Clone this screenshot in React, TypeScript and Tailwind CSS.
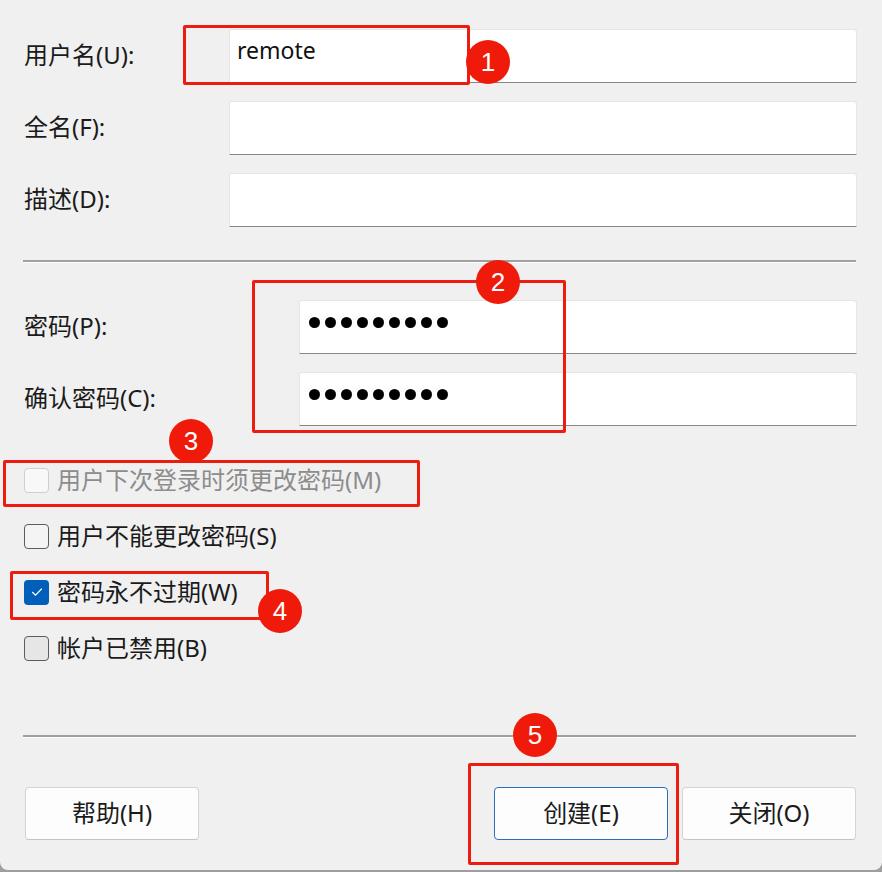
import React from "react";

const FONT = { fontFamily: '"Noto Sans", "Noto Sans CJK SC", sans-serif' };

function TextField({ value }: { value?: string }) {
  return (
    <div className="flex-1 h-[54px] bg-white border border-[#e6e6e6] border-b-[#868686] rounded-t-[3px] pl-[7px] pt-[3px] text-[23px] text-[#111]">
      {value}
    </div>
  );
}

function PasswordField() {
  return (
    <div className="flex-1 h-[54px] bg-white border border-[#e6e6e6] border-b-[#868686] rounded-t-[3px] pl-[9px] pt-[16px] flex items-start gap-[5px]">
      {Array.from({ length: 9 }).map((_, i) => (
        <span key={i} className="block w-[11px] h-[11px] rounded-full bg-black" />
      ))}
    </div>
  );
}

function Row({ label, labelWidth, children }: { label: string; labelWidth: string; children: React.ReactNode }) {
  return (
    <div className="flex items-center pr-[25px]">
      <div className={`${labelWidth} pl-[24px] text-[24px] text-[#1b1b1b] leading-none pb-[2px]`}>{label}</div>
      {children}
    </div>
  );
}

type BoxState = "disabled" | "off" | "on" | "hover";

function CheckRow({ label, state }: { label: string; state: BoxState }) {
  let box = "border border-[#5c5c5c] bg-[#f4f4f4]";
  if (state === "disabled") box = "border border-[#cfcfcf] bg-[#f8f8f8]";
  if (state === "hover") box = "border border-[#5c5c5c] bg-[#e6e6e6]";
  if (state === "on") box = "bg-[#005fb8]";
  return (
    <div className="h-[56px] flex items-center pl-[24px] gap-[8px]">
      <div className={`w-[25px] h-[25px] rounded-[4px] flex items-center justify-center ${box}`}>
        {state === "on" && (
          <svg width="14" height="14" viewBox="0 0 14 14" fill="none">
            <path d="M2.5 7.3 L5.6 10.2 L11.5 4" stroke="white" strokeWidth="1.2" strokeLinecap="round" strokeLinejoin="round" />
          </svg>
        )}
      </div>
      <span className={`text-[24px] leading-none ${state === "disabled" ? "text-[#8c8c8c]" : "text-[#1b1b1b]"}`}>
        {label}
      </span>
    </div>
  );
}

function Separator() {
  return (
    <div className="ml-[23px] mr-[26px]">
      <div className="h-[2px] bg-[#a0a0a0]" />
      <div className="h-[1px] bg-white" />
    </div>
  );
}

function Button({ label, primary }: { label: string; primary?: boolean }) {
  return (
    <div
      className={`w-[174px] h-[53px] rounded-[4px] bg-[#fdfdfd] flex items-center justify-center text-[24px] text-[#1b1b1b] border ${
        primary ? "border-[#2a6fb8]" : "border-[#d4d4d4] border-b-[#c4c4c4]"
      }`}
    >
      <span className="pb-[2px]">{label}</span>
    </div>
  );
}

function Marker({ n, className }: { n: number; className: string }) {
  return (
    <div
      className={`absolute w-[44px] h-[44px] rounded-full bg-[#f01a0a] text-white text-[26px] flex items-center justify-center ${className}`}
      style={{ fontFamily: '"Liberation Sans", Arial, sans-serif' }}
    >
      {n}
    </div>
  );
}

export default function App() {
  return (
    <div className="w-[882px] h-[872px] bg-[#9e9e9e]" style={FONT}>
      <div className="relative w-[882px] h-[870px] bg-[#f0f0f0] rounded-b-[8px] overflow-hidden">
        <div className="pt-[29px] flex flex-col gap-[18px]">
          <Row label="用户名(U):" labelWidth="w-[229px]">
            <TextField value="remote" />
          </Row>
          <Row label="全名(F):" labelWidth="w-[229px]">
            <TextField />
          </Row>
          <Row label="描述(D):" labelWidth="w-[229px]">
            <TextField />
          </Row>
        </div>

        <div className="mt-[33px]">
          <Separator />
        </div>

        <div className="mt-[37px] flex flex-col gap-[18px]">
          <Row label="密码(P):" labelWidth="w-[299px]">
            <PasswordField />
          </Row>
          <Row label="确认密码(C):" labelWidth="w-[299px]">
            <PasswordField />
          </Row>
        </div>

        <div className="mt-[26px] flex flex-col">
          <CheckRow label="用户下次登录时须更改密码(M)" state="disabled" />
          <CheckRow label="用户不能更改密码(S)" state="off" />
          <CheckRow label="密码永不过期(W)" state="on" />
          <CheckRow label="帐户已禁用(B)" state="hover" />
        </div>

        <div className="mt-[59px]">
          <Separator />
        </div>

        <div className="mt-[49px] flex justify-between pl-[25px] pr-[26px]">
          <Button label="帮助(H)" />
          <div className="flex gap-[14px]">
            <Button label="创建(E)" primary />
            <Button label="关闭(O)" />
          </div>
        </div>

        {/* annotations */}
        <div className="absolute left-[183px] top-[25px] w-[287px] h-[60px] border-[3px] border-[#ec1c10] rounded-[2px]" />
        <div className="absolute left-[252px] top-[280px] w-[314px] h-[153px] border-[3px] border-[#ec1c10] rounded-[2px]" />
        <div className="absolute left-[3px] top-[460px] w-[417px] h-[47px] border-[3px] border-[#ec1c10] rounded-[2px]" />
        <div className="absolute left-[10px] top-[571px] w-[259px] h-[49px] border-[3px] border-[#ec1c10] rounded-[2px]" />
        <div className="absolute left-[468px] top-[763px] w-[211px] h-[102px] border-[3px] border-[#ec1c10] rounded-[2px]" />

        <Marker n={1} className="left-[466px] top-[40px]" />
        <Marker n={2} className="left-[476px] top-[260px]" />
        <Marker n={3} className="left-[169px] top-[419px]" />
        <Marker n={4} className="left-[258px] top-[589px]" />
        <Marker n={5} className="left-[513px] top-[713px]" />
      </div>
    </div>
  );
}
